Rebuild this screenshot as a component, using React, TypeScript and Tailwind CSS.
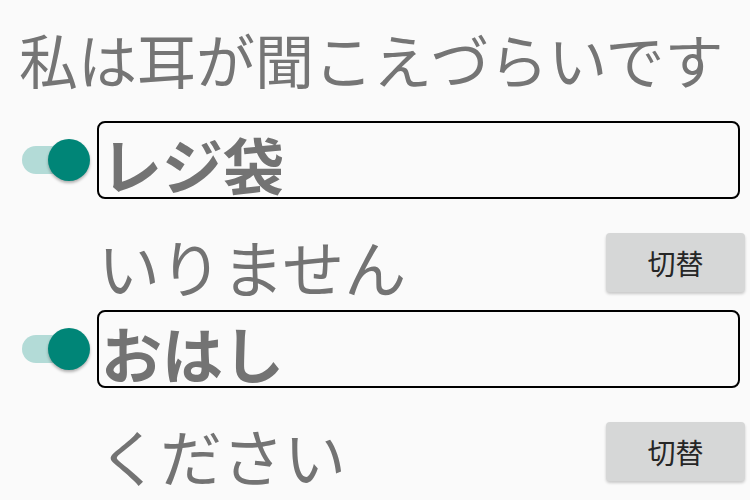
import React from "react";

const font = { fontFamily: '"Noto Sans CJK JP", "Noto Sans", sans-serif' };

function Toggle() {
  return (
    <div className="relative w-[68px] h-[42px] shrink-0">
      <div className="absolute left-0 top-[7px] w-[58px] h-[28px] rounded-full bg-[#b3dbd7]" />
      <div className="absolute right-0 top-0 w-[42px] h-[42px] rounded-full bg-[#008577] shadow-[0_2px_3px_rgba(0,0,0,0.3)]" />
    </div>
  );
}

function SwitchButton() {
  return (
    <button className="w-[139px] h-[59px] rounded-[4px] bg-[#d6d7d7] text-[28px] text-[#262626] shadow-[0_2px_3px_rgba(0,0,0,0.2)] leading-none">
      切替
    </button>
  );
}

function Item({ label, sub }: { label: string; sub: string }) {
  return (
    <>
      <div className="flex items-center h-[78px] pl-[22px] pr-[10px] gap-[7px]">
        <Toggle />
        <div className="flex-1 h-full border-2 border-black rounded-[8px] flex items-center pl-[2px] pt-[6px]">
          <span className="text-[61px] font-semibold text-[#737373] leading-none">{label}</span>
        </div>
      </div>
      <div className="flex items-start justify-between h-[111px] pl-[98px] pr-[5px]">
        <span className="text-[62px] text-[#737373] leading-none mt-[36px]">{sub}</span>
        <div className="mt-[34px]">
          <SwitchButton />
        </div>
      </div>
    </>
  );
}

export default function App() {
  return (
    <div className="w-[750px] h-[500px] bg-[#fafafa] overflow-hidden" style={font}>
      <div className="h-[121px] flex items-center pl-[19px] pb-[4px]">
        <span className="text-[59px] text-[#757575] leading-none">私は耳が聞こえづらいです</span>
      </div>
      <Item label="レジ袋" sub="いりません" />
      <Item label="おはし" sub="ください" />
    </div>
  );
}
